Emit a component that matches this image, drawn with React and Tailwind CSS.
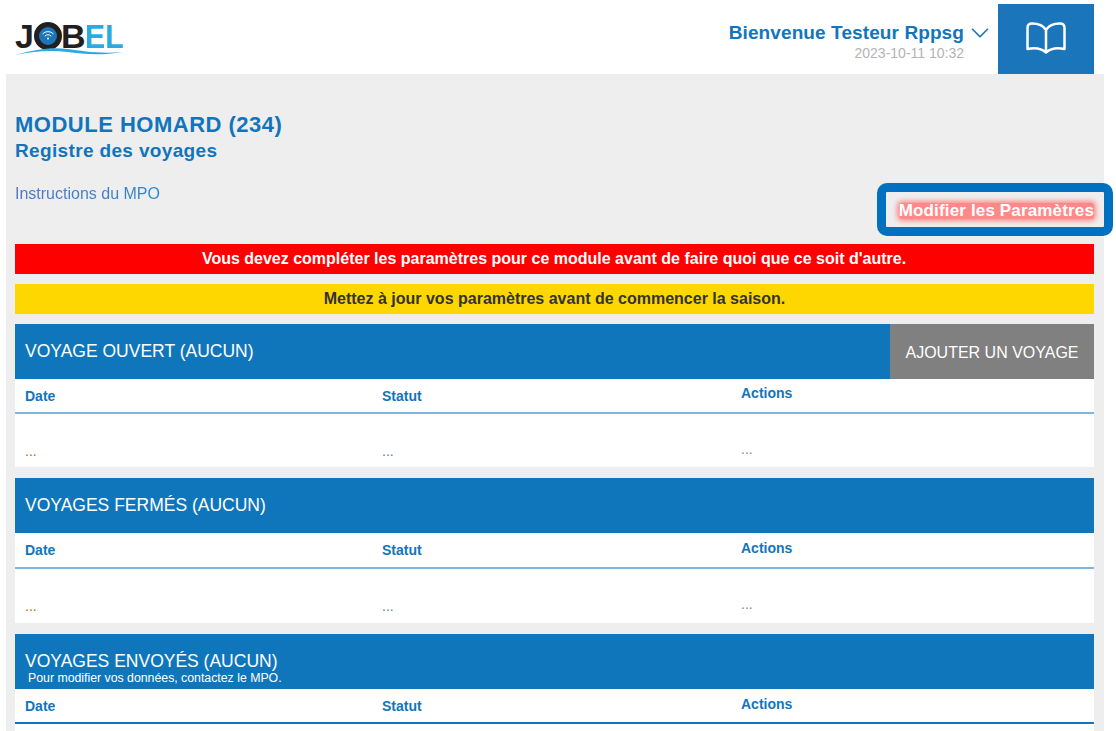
import { ChevronDown } from "lucide-react";

const Colonnes = ({ hauteur = "h-[35px]", bordure = "border-[#7db7e0]" }) => (
  <div className={`grid grid-cols-[357px_359px_1fr] ${hauteur} px-[10px] border-b-2 ${bordure} text-[14px] font-bold text-[#1275bc]`}>
    <span className="pt-[7px]">Date</span>
    <span className="pt-[7px]">Statut</span>
    <span className="pt-[4.500px]">Actions</span>
  </div>
);

const Lignes = ({ hauteur }) => (
  <div className={`grid grid-cols-[357px_359px_1fr] ${hauteur} bg-white px-[10px] text-[14px] leading-none`}>
    <span className="pt-[30px] text-[#b5651d]">...</span>
    <span className="pt-[30px] text-[#5b7fa8]">...</span>
    <span className="pt-[28px] text-[#8a8a8a]">...</span>
  </div>
);

function Section({ titre, note, bouton, entete = "h-[55px]", children }) {
  return (
    <section className="mb-[11px]">
      <div className={`flex ${entete} bg-[#1076bc] text-white`}>
        <div className="flex flex-1 flex-col justify-center px-[10px]">
          <h2 className={`text-[17.5px] leading-[20px] ${note ? "mt-[12px]" : "-mt-[1px]"}`}>{titre}</h2>
          {note && <p className="mt-[1px] pl-[3px] text-[12.3px] leading-[13px]">{note}</p>}
        </div>
        {bouton && (
          <button className="w-[204px] bg-[#808080] pt-[3px] text-[16px] text-white">{bouton}</button>
        )}
      </div>
      <div className="bg-white">{children}</div>
    </section>
  );
}

function Logo() {
  return (
    <div className="relative h-[44px] w-[110px] font-bold">
      <div className="flex items-center text-[34px] leading-[30px]">
        <span className="w-[20px] text-[#231f20]">J</span>
        <svg viewBox="0 0 28 28" className="h-[28px] w-[28px] shrink-0">
          <circle cx="14" cy="14" r="11.5" fill="#1b75bb" stroke="#231f20" strokeWidth="5" />
          <path d="M8.500 12a7.500 7.500 0 0 1 11 0M10.800 14.200a4.200 4.200 0 0 1 6.400 0" fill="none" stroke="#fff" strokeWidth="1" />
          <circle cx="14" cy="16.500" r="1" fill="#fff" />
        </svg>
        <span className="-ml-[1px] w-[25px] text-[#231f20]">B</span>
        <span className="inline-block origin-left scale-x-[0.89] text-[#29abe2]">EL</span>
      </div>
      <svg viewBox="0 0 110 10" className="absolute left-0 top-[25px] h-[10px] w-[110px]">
        <path d="M0 9C22 3 36 1 52 3S85 8 108 6C85 10 68 8 52 6S20 5 0 9Z" fill="#29abe2" />
      </svg>
    </div>
  );
}

export default function App() {
  return (
    <div className="relative h-[731px] w-[1116px] overflow-hidden bg-white font-['Liberation_Sans',Arial,sans-serif]">
      <header className="flex h-[74px] items-start justify-between pl-[15px] pr-[22px]">
        <div className="pt-[21px]">
          <Logo />
        </div>
        <div className="flex">
          <div className="mr-[3px] pt-[22px] text-right">
            <div className="flex h-[22px] items-center">
              <span className="text-[19px] font-bold leading-[22px] tracking-[0.1px] text-[#1275bc]">Bienvenue Testeur Rppsg</span>
              <ChevronDown className="ml-[1px] h-[30px] w-[30px] text-[#1275bc]" strokeWidth={1.3} />
            </div>
            <div className="mt-[2px] pr-[31px] text-[14px] leading-[15px] text-[#b3b3b3]">2023-10-11 10:32</div>
          </div>
          <div className="mt-[4px] flex h-[70px] w-[96px] items-center justify-center bg-[#1b75bb]">
            <svg viewBox="0 0 40 32" className="-mt-[2px] h-[32px] w-[40px] text-white" fill="none" stroke="currentColor" strokeWidth="2.500" strokeLinejoin="round" strokeLinecap="round">
              <path d="M20 8C17 3 12 1.500 6 1.500 3 1.500 1.500 3 1.500 6v21c7-1.500 13.500-1 18.500 3.500 5-4.500 11.500-5 18.500-3.500V6c0-3-1.500-4.500-4.500-4.500-6 0-11 1.500-14 6.500Zm0 0v22.500" />
            </svg>
          </div>
        </div>
      </header>

      <main className="ml-[6px] h-[657px] w-[1098px] bg-[#eeeeee] pl-[9px] pr-[10px] pt-[38px]">
        <h1 className="text-[22px] font-bold leading-[26px] tracking-[0.5px] text-[#1275bc]">MODULE HOMARD (234)</h1>
        <p className="text-[19px] font-bold leading-[26px] tracking-[0.35px] text-[#1275bc]">Registre des voyages</p>

        <div className="mt-[9px] flex h-[71px] items-start justify-between">
          <a className="mt-[11px] bg-gradient-to-r from-[#4f74c4] to-[#2a86cc] bg-clip-text text-[16px] leading-[20px] text-transparent">Instructions du MPO</a>
          <span className="mt-[30px] rounded-[3px] bg-[#ff8888] text-[17px] font-bold leading-[16px] tracking-[0.15px] text-white shadow-[0_0_5px_2px_#ff8888]">Modifier les Paramètres</span>
        </div>

        <div className="mb-[10px] flex h-[30px] items-center justify-center bg-[#ff0000] pr-[1px] text-[16px] font-bold text-white">
          Vous devez compléter les paramètres pour ce module avant de faire quoi que ce soit d'autre.
        </div>
        <div className="mb-[10px] flex h-[30px] items-center justify-center bg-[#ffd700] text-[16px] font-bold text-[#333333]">
          Mettez à jour vos paramètres avant de commencer la saison.
        </div>

        <Section titre="VOYAGE OUVERT (AUCUN)" bouton="AJOUTER UN VOYAGE" entete="h-[54.500px]">
          <Colonnes />
          <Lignes hauteur="h-[53.500px]" />
        </Section>
        <Section titre="VOYAGES FERMÉS (AUCUN)">
          <Colonnes hauteur="h-[36px]" />
          <Lignes hauteur="h-[54px]" />
        </Section>
        <Section titre="VOYAGES ENVOYÉS (AUCUN)" note="Pour modifier vos données, contactez le MPO.">
          <Colonnes bordure="border-[#1275bc]" />
          <div className="h-[7px] bg-white" />
        </Section>
      </main>

      {/* encadré de mise en évidence par-dessus le bouton */}
      <div className="absolute left-[877px] top-[183px] h-[53px] w-[236px] rounded-[10px] border-[9px] border-[#0070c0]" />
    </div>
  );
}
